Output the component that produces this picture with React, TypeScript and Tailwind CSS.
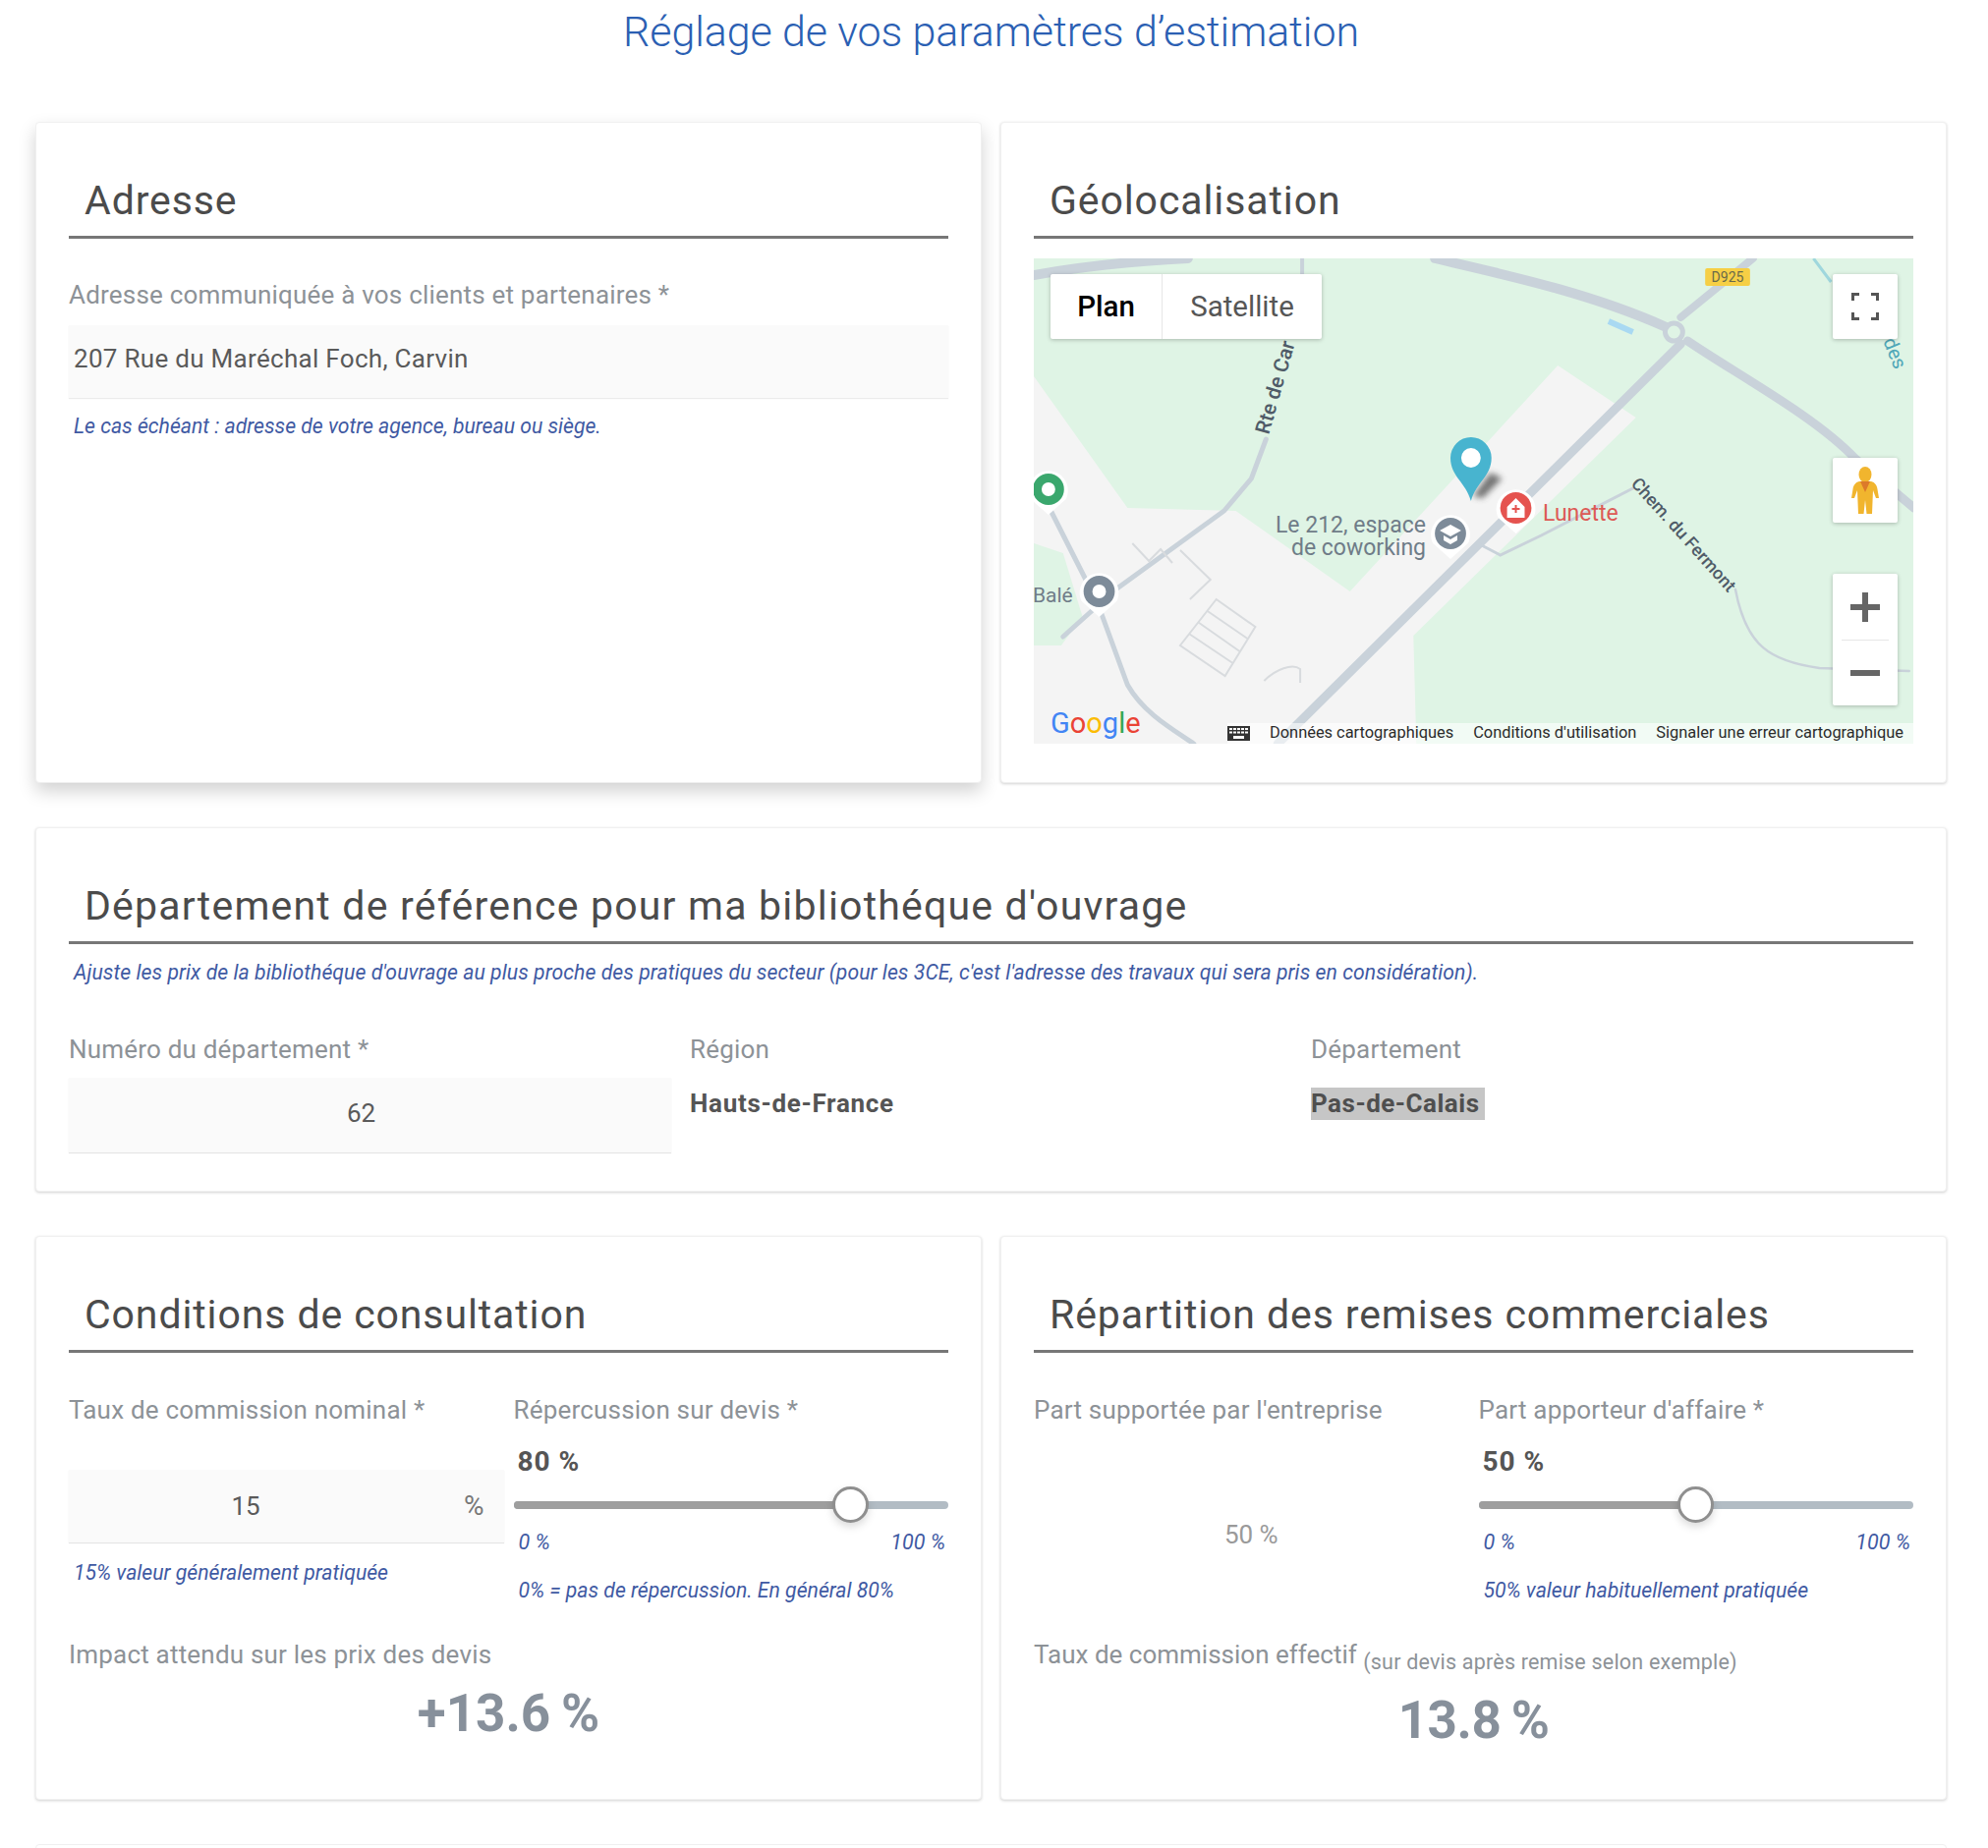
import { FC, ReactNode } from "react"

const Card: FC<{ title: string; wide?: boolean; className?: string; children: ReactNode }> = ({ title, wide, className = "", children }) => (
    <section className={`bg-white rounded-[4px] border border-[#f0f0f0] px-[33px] pt-[53px] ${className}`}>
        <h2 className={`pl-4 pb-[10px] border-b-[3px] border-[#777777] text-[41px] leading-[52px] ${wide ? "tracking-[1.2px]" : "tracking-[0.9px]"} text-[#4b4b4b] font-normal whitespace-nowrap`}>
            {title}
        </h2>
        {children}
    </section>
)

const Label: FC<{ children: ReactNode; className?: string }> = ({ children, className = "" }) => (
    <div className={`text-[26px] leading-[32px] tracking-[0.2px] text-[#8d9297] ${className}`}>{children}</div>
)

const Hint: FC<{ children: ReactNode; className?: string }> = ({ children, className = "" }) => (
    <p className={`pl-[5px] text-[21.2px] leading-[28px] italic text-[#3f5aa3] ${className}`}>{children}</p>
)

const Slider: FC<{ value: number }> = ({ value }) => {
    return (
        <div className="relative h-[37px] mt-[9px] flex items-center">
            <div className="w-full h-[8px] rounded-full bg-[#b2bcc4] overflow-hidden">
                <div className="h-full bg-[#9e9e9e]" style={{ width: `${value}%` }} />
            </div>
            <div
                className="absolute top-0 w-[37px] h-[37px] rounded-full bg-white border-[3px] border-[#8f8f8f] shadow-[0_4px_8px_rgba(0,0,0,0.15)]"
                style={{ left: `calc((100% - 37px) * ${value / 100})` }}
            />
        </div>
    )
}

const SliderField: FC<{ label: string; value: number; hint: string }> = ({ label, value, hint }) => (
    <div>
        <Label>{label}</Label>
        <div className="mt-[21px] pl-1 text-[28px] leading-[32px] font-bold tracking-[1px] text-[#555555]">{value} %</div>
        <Slider value={value} />
        <div className="mt-[8px] pl-[5px] pr-[3px] flex justify-between text-[21.5px] leading-[24px] italic text-[#3f5aa3]">
            <span>0 %</span>
            <span>100 %</span>
        </div>
        <Hint className="mt-[23px]">{hint}</Hint>
    </div>
)

const GoogleMap = () => (
    <div className="relative mt-[20px] h-[494px] overflow-hidden bg-[#dff4e5]">
        <svg className="absolute inset-0" width="897" height="494" viewBox="0 0 897 494" fill="none">
            <defs>
                <filter id="pinShadow" x="-50%" y="-50%" width="200%" height="200%">
                    <feGaussianBlur stdDeviation="3" />
                </filter>
            </defs>
            <g transform="scale(0.993 1)">
                <path fill="#f4f4f4" d="M537 109 617 162 389 384 392 494H0V120L96 254 207 257 324 339Z" />
                <path fill="#dff4e5" d="M0 290 30 300 50 365 28 394H0Z" />
                <g stroke="#c9d2da" strokeLinecap="round">
                    <path strokeWidth="9" d="M663 87 250 494" />
                    <path strokeWidth="10" d="M411 0C480 16 570 35 648 70" />
                    <path strokeWidth="8" d="M737 0 663 60" />
                    <path strokeWidth="9" d="M670 84C720 118 800 160 842 204L902 254" />
                    <path strokeWidth="10" d="M0 17C50 8 100 3 158 0" />
                    <path strokeWidth="4" d="M275 0V40" />
                    <path strokeWidth="5" d="M238 184 223 224 195 257 84 337 30 385" />
                    <path strokeWidth="5" d="M16 254 65 350 96 434C112 462 140 478 164 494" />
                    <path strokeWidth="3" d="M614 234 520 282 478 302 455 290" />
                    <path strokeWidth="2.500" d="M719 337C730 395 755 410 805 417L897 420" />
                    <circle cx="656" cy="75" r="9" strokeWidth="5" fill="#dff4e5" />
                </g>
                <g stroke="#d8dbde" strokeWidth="2">
                    <path d="M187 347 227 375 196 425 150 394ZM178 359 219 387M168 370 211 400M159 382 204 412" />
                    <path d="M101 290 118 308 130 296 142 310M150 297 181 327 160 347" />
                    <path d="M236 430C248 418 265 412 273 418V432" />
                </g>
                <path stroke="#a9d9f2" strokeWidth="6" d="M589 64 614 75" />
                <path stroke="#9fd7dd" strokeWidth="3" d="M799 0 817 24" />

                {/* marqueur de l'adresse */}
                <path fill="#3c3c3c" opacity="0.7" filter="url(#pinShadow)" d="M450 242 468 218 480 224 460 244Z" />
                <path fill="#48b4cf" d="M448 247C443 228 427 222 427 203A21 21 0 0 1 469 203C469 222 453 228 448 247Z" />
                <circle cx="448" cy="203" r="10" fill="#fff" />

                {/* points d'intérêt */}
                <path fill="#fff" d="M494 280 476 264A20 20 0 1 1 512 264Z" />
                <circle cx="494" cy="254" r="16" fill="#e5534f" />
                <path fill="#fff" d="M494 244 503 253V264H485V253Z" />
                <path stroke="#e5534f" strokeWidth="2" d="M494 251V259M490 255H498" />

                <path fill="#fff" d="M427 306 409 290A20 20 0 1 1 445 290Z" />
                <circle cx="427" cy="280" r="16" fill="#7d8b99" />
                <path fill="#fff" d="M427 271 438 277 427 283 416 277ZM420 282 427 286 434 282V287L427 291 420 287Z" />

                <path fill="#fff" d="M67 365 49 349A20 20 0 1 1 85 349Z" />
                <circle cx="67" cy="339" r="16" fill="#7d8b99" />
                <circle cx="67" cy="339" r="7" fill="#fff" />

                <path fill="#fff" d="M15 261-3 245A20 20 0 1 1 33 245Z" />
                <circle cx="15" cy="235" r="16" fill="#3aa76d" />
                <circle cx="15" cy="235" r="7" fill="#fff" />
                <rect x="688" y="10" width="46" height="18" rx="2" fill="#f6cf45" />
            </g>

            <g fontFamily="Roboto, sans-serif">
                <text x="706" y="24" textAnchor="middle" fontSize="14" fill="#6a6a4a">D925</text>
                <text x="518" y="267" fontSize="23" fill="#dd5a55">Lunette</text>
                <text x="399" y="279" textAnchor="end" fontSize="23" fill="#6f7c88">Le 212, espace</text>
                <text x="399" y="302" textAnchor="end" fontSize="23" fill="#6f7c88">de coworking</text>
                <text x="-1" y="350" fontSize="21" fill="#6f7c88">Balé</text>
                <text transform="translate(239 180) rotate(-74)" fontSize="21" fontWeight="500" fill="#4f5b68">Rte de Car</text>
                <text transform="translate(607 230) rotate(48)" fontSize="18" fontWeight="500" fill="#4f5b68">Chem. du Fermont</text>
                <text transform="translate(864 84) rotate(68)" fontSize="20" fill="#4fa7b8">des</text>
            </g>

            {/* logo */}
            <g fontFamily="Roboto, sans-serif" fontSize="29">
                <text x="17" y="483">
                    <tspan fill="#4285f4">G</tspan>
                    <tspan fill="#ea4335">o</tspan>
                    <tspan fill="#fbbc05">o</tspan>
                    <tspan fill="#4285f4">g</tspan>
                    <tspan fill="#34a853">l</tspan>
                    <tspan fill="#ea4335">e</tspan>
                </text>
            </g>
        </svg>

        <div className="absolute left-[17px] top-[16px] h-[66px] w-[276px] flex bg-white rounded-[2px] shadow-[0_1px_4px_rgba(0,0,0,0.25)] text-[29.5px] [font-family:Roboto,sans-serif]">
            <div className="w-[114px] flex items-center justify-center font-medium text-black border-r border-[#e6e6e6]">Plan</div>
            <div className="flex-1 flex items-center justify-center text-[#565656]">Satellite</div>
        </div>

        <div className="absolute right-[16px] top-[16px] w-[66px] h-[66px] bg-white rounded-[2px] shadow-[0_1px_4px_rgba(0,0,0,0.25)] flex items-center justify-center">
            <svg width="28" height="28" viewBox="0 0 28 28" fill="none" stroke="#555" strokeWidth="3">
                <path d="M1.500 8V1.500H8M20 1.500H26.500V8M26.500 20V26.500H20M8 26.500H1.500V20" />
            </svg>
        </div>

        <div className="absolute right-[16px] top-[203px] w-[66px] h-[66px] bg-white rounded-[2px] shadow-[0_1px_4px_rgba(0,0,0,0.25)] flex items-center justify-center">
            <svg width="28" height="48" viewBox="0 0 28 48">
                <ellipse cx="14" cy="8" rx="6.500" ry="8" fill="#f1b52e" />
                <path fill="#f1b52e" d="M8 15H20C24 16 26 19 26.500 23L28 32H25L22 24 21 48H15.500L14 34 12.500 48H7L6 24 3 32H0L1.500 23C2 19 4 16 8 15Z" />
                <path fill="#dc7a2a" d="M9 15H19L14 26Z" />
            </svg>
        </div>

        <div className="absolute right-[16px] top-[321px] w-[66px] h-[134px] bg-white rounded-[2px] shadow-[0_1px_4px_rgba(0,0,0,0.25)] flex flex-col items-center">
            <div className="h-[67px] flex items-center">
                <svg width="30" height="30" viewBox="0 0 30 30" fill="#666">
                    <path d="M12 0H18V12H30V18H18V30H12V18H0V12H12Z" />
                </svg>
            </div>
            <div className="w-[48px] h-px bg-[#e6e6e6]" />
            <div className="flex-1 flex items-center">
                <svg width="30" height="6" viewBox="0 0 30 6" fill="#666">
                    <rect width="30" height="6" />
                </svg>
            </div>
        </div>

        <div className="absolute right-0 bottom-0 h-[21px] flex items-center pr-[10px] bg-white/60 text-[16.4px] text-[#2b2b2b] [font-family:Roboto,sans-serif]">
            <svg className="mr-[20px]" width="23" height="15" viewBox="0 0 23 15" fill="#333">
                <path d="M0 0H23V15H0ZM2 2V4H5V2ZM6 2V4H9V2ZM10 2V4H13V2ZM14 2V4H17V2ZM18 2V4H21V2ZM2 5.500V7.500H5V5.500ZM6 5.500V7.500H9V5.500ZM10 5.500V7.500H13V5.500ZM14 5.500V7.500H17V5.500ZM18 5.500V7.500H21V5.500ZM6 10V13H17V10Z" fillRule="evenodd" />
            </svg>
            <span>Données cartographiques</span>
            <span className="ml-[20px]">Conditions d'utilisation</span>
            <span className="ml-[20px]">Signaler une erreur cartographique</span>
        </div>
    </div>
)

const App = () => {
    return (
        <div className="h-[1881px] overflow-hidden bg-white pl-[36px] pr-[42px] [font-family:Roboto,'Liberation_Sans',sans-serif]">
            <h1 className="pt-[2px] text-center text-[43px] leading-[60px] font-light tracking-[-0.1px] text-[#2b5fb3]">
                Réglage de vos paramètres d’estimation
            </h1>

            <div className="mt-[62px] grid grid-cols-2 gap-x-[19px]">
                <Card title="Adresse" className="shadow-[0_8px_18px_rgba(0,0,0,0.18)]">
                    <Label className="mt-[41px]">Adresse communiquée à vos clients et partenaires *</Label>
                    <div className="mt-[15px] h-[74px] pl-[5px] pt-[17px] bg-[#fafafa] shadow-[0_1px_1px_rgba(0,0,0,0.08)] text-[26px] leading-[34px] tracking-[0.3px] text-[#5a5a5a]">
                        207 Rue du Maréchal Foch, Carvin
                    </div>
                    <Hint className="mt-[15px]">Le cas échéant : adresse de votre agence, bureau ou siège.</Hint>
                </Card>

                <Card title="Géolocalisation" className="pb-[39px] shadow-[0_1px_3px_rgba(0,0,0,0.18)]">
                    <GoogleMap />
                </Card>
            </div>

            <Card wide title="Département de référence pour ma bibliothéque d'ouvrage" className="mt-[45px] pb-[39px] shadow-[0_1px_3px_rgba(0,0,0,0.18)]">
                <Hint className="mt-[15px] tracking-[0.06px]">
                    Ajuste les prix de la bibliothéque d'ouvrage au plus proche des pratiques du secteur (pour les 3CE, c'est l'adresse des travaux qui sera pris en considération).
                </Hint>
                <div className="mt-[48px] grid grid-cols-3 gap-x-[19px]">
                    <div>
                        <Label>Numéro du département *</Label>
                        <div className="mt-[13px] h-[76px] flex items-center justify-center pr-[18px] pb-[4px] bg-[#fafafa] shadow-[0_1px_1px_rgba(0,0,0,0.1)] text-[26px] text-[#5a5a5a]">
                            62
                        </div>
                    </div>
                    <div>
                        <Label>Région</Label>
                        <div className="mt-[23px] text-[26px] leading-[32px] font-bold tracking-[0.7px] text-[#555555]">Hauts-de-France</div>
                    </div>
                    <div>
                        <Label>Département</Label>
                        <div className="mt-[23px] text-[26px] leading-[32px] font-bold tracking-[0.5px] text-[#4f4f4f]">
                            <span className="inline-block bg-[#c6c6c6] pr-[5px] pb-[1px]">Pas-de-Calais</span>
                        </div>
                    </div>
                </div>
            </Card>

            <div className="mt-[45px] grid grid-cols-2 gap-x-[19px]">
                <Card title="Conditions de consultation" className="pb-[54px] shadow-[0_1px_3px_rgba(0,0,0,0.18)]">
                    <div className="mt-[42px] grid grid-cols-2 gap-x-[10px]">
                        <div>
                            <Label>Taux de commission nominal *</Label>
                            <div className="mt-[45px] h-[74px] flex items-center bg-[#fafafa] shadow-[0_1px_1px_rgba(0,0,0,0.1)] text-[26px] text-[#5a5a5a]">
                                <div className="w-[360px] text-center">15</div>
                                <div className="flex-1 pl-[22px] text-center text-[28px] text-[#777777]">%</div>
                            </div>
                            <Hint className="mt-[17px]">15% valeur généralement pratiquée</Hint>
                        </div>
                        <SliderField label="Répercussion sur devis *" value={80} hint="0% = pas de répercussion. En général 80%" />
                    </div>
                    <Label className="mt-[35px]">Impact attendu sur les prix des devis</Label>
                    <div className="mt-[12px] text-center text-[53px] leading-[64px] font-bold text-[#87909b]">+13.6{"\u2009"}%</div>
                </Card>

                <Card title="Répartition des remises commerciales" className="pb-[48px] shadow-[0_1px_3px_rgba(0,0,0,0.18)]">
                    <div className="mt-[42px] grid grid-cols-2 gap-x-[10px]">
                        <div>
                            <Label>Part supportée par l'entreprise</Label>
                            <div className="mt-[95px] text-center text-[26px] leading-[32px] text-[#9a9a9a]">50 %</div>
                        </div>
                        <SliderField label="Part apporteur d'affaire *" value={50} hint="50% valeur habituellement pratiquée" />
                    </div>
                    <Label className="mt-[35px] whitespace-nowrap">
                        <span className="tracking-normal">Taux de commission effectif </span>
                        <span className="relative top-[6px] text-[21.5px]">(sur devis après remise selon exemple)</span>
                    </Label>
                    <div className="mt-[17px] text-center text-[53px] leading-[64px] font-bold tracking-[-0.5px] text-[#87909b]">13.8{"\u2009"}%</div>
                </Card>
            </div>

            <div className="mt-[45px] h-[60px] rounded-[4px] border border-[#f0f0f0] bg-white" />
        </div>
    )
}

export default App
